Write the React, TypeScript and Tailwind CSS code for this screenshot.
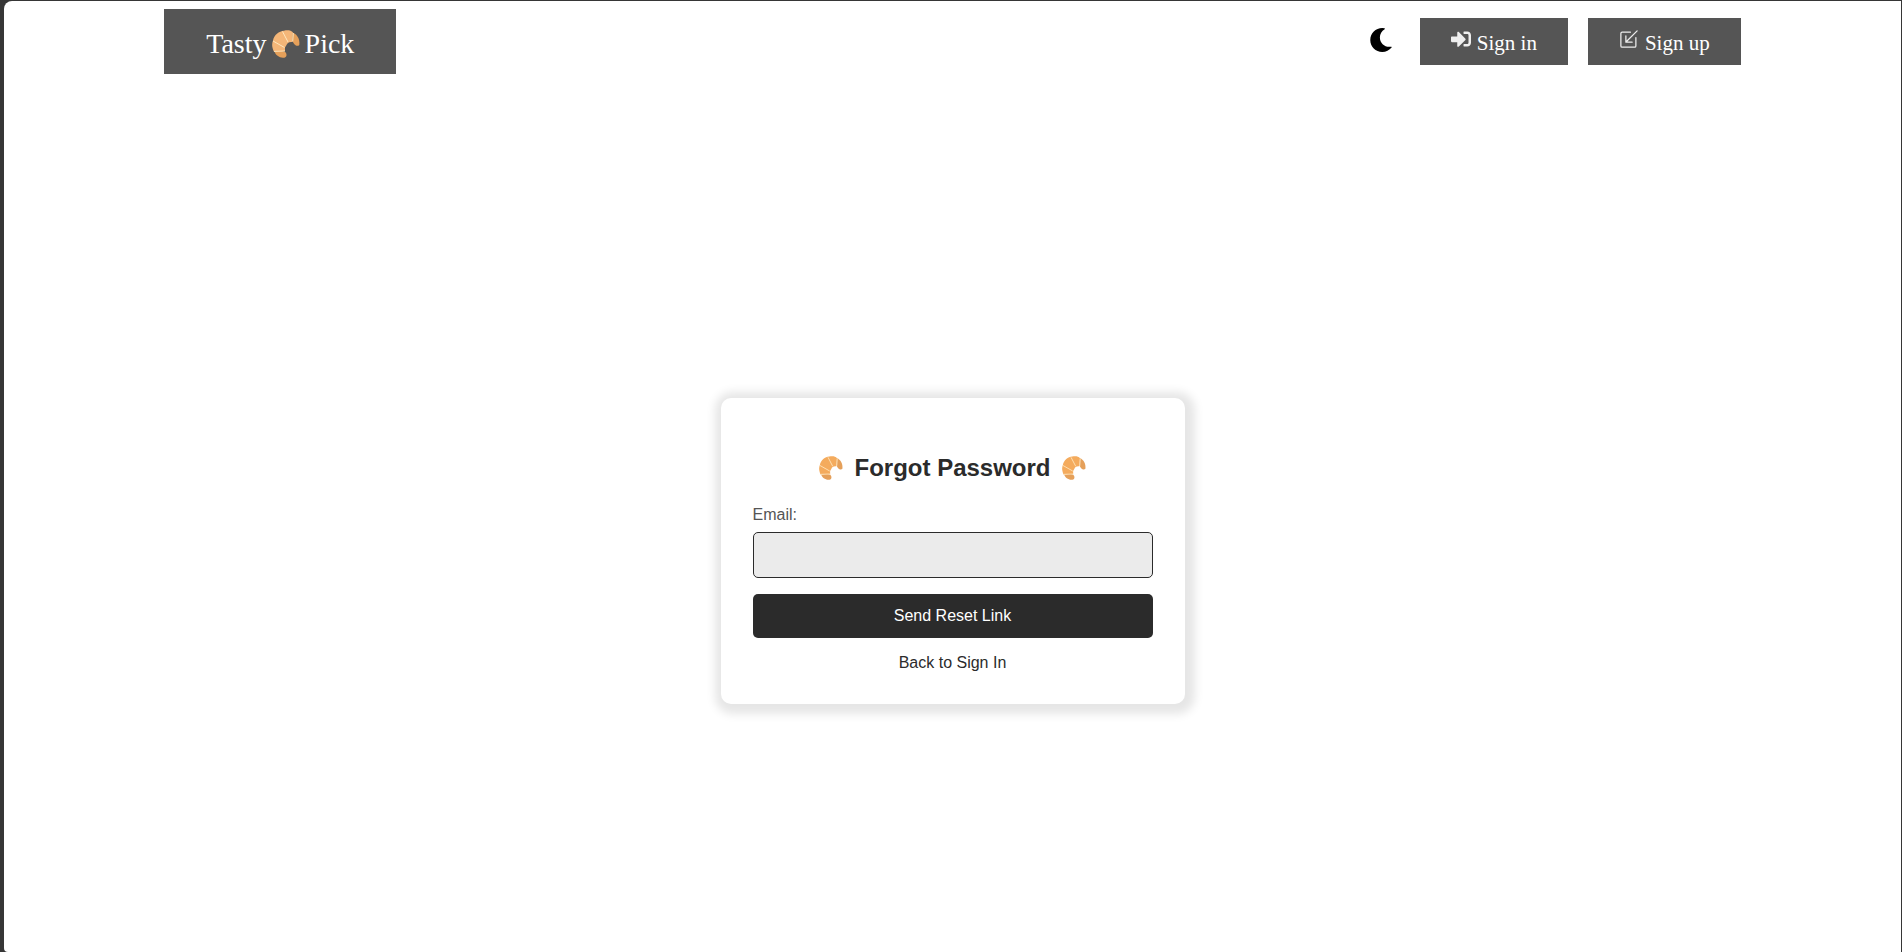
import { FaMoon, FaSignInAlt } from "react-icons/fa";
import { BsBoxArrowInDownLeft } from "react-icons/bs";

function Croissant({ className }: { className?: string }) {
  return (
    <svg viewBox="0 0 28 28" className={className} aria-hidden="true">
      <path d="M12 .7C15 0 19 0 21 2.5L20.500 12C17 11.500 15 13 14.500 15L13 17.500L13 21L1.800 21.500C-.5 16 0 13 1 10.500C2 5 7 1 12 .7Z" fill="currentColor" />
      <path d="M21 2.700C25 4 28 9 27.300 15C25 17.500 21 14 20.600 10.500Z" fill="#e5a05a" />
      <path d="M2.500 21.600C6 21 13 20.500 14 23C15.500 26 13.500 28 11 27.700C7 27.700 3.500 25 2.500 21.600Z" fill="#e5a05a" />
      <path d="M10.500 1.500L16 12M21.300 3L20.700 11.500M1 11L12.500 17.500M2 21.400L13 21" fill="none" stroke="#ffe7bd" strokeWidth="1" />
    </svg>
  );
}

export default function App() {
  return (
    <div className="flex min-h-screen bg-[#363636] pt-px pr-px pl-1">
      <div className="flex flex-1 flex-col rounded-tl-lg rounded-bl-sm bg-white">
        <header className="mx-auto flex w-[83.1%] items-center justify-between pt-2">
          <a href="#" className="flex h-[65px] items-center bg-[#555555] px-[42px] pt-1 font-['Liberation_Serif',serif] text-[28px] leading-8 text-white">
            Tasty
            <Croissant className="mx-[5px] size-7 text-[#f4b678]" />
            Pick
          </a>
          <nav className="flex items-center gap-5 font-['Liberation_Serif',serif] text-[21px] leading-6 text-white">
            <button type="button" aria-label="Toggle dark mode" className="px-[7px] pb-1 text-black">
              <FaMoon className="size-6" />
            </button>
            <a href="#" className="flex h-[47px] items-center gap-1.5 bg-[#555555] px-[31px] pt-0.5">
              <FaSignInAlt className="mb-2 size-5 text-[#eeeeee]" />
              <span>Sign in</span>
            </a>
            <a href="#" className="flex h-[47px] items-center gap-1.5 bg-[#555555] px-[31px] pt-0.5">
              <BsBoxArrowInDownLeft className="mb-2 size-5 text-[#eeeeee]" />
              <span>Sign up</span>
            </a>
          </nav>
        </header>
        <main className="flex flex-1 items-center justify-center pt-19">
          <form className="w-[464px] rounded-[10px] bg-white px-8 pt-14 pb-8 font-['Liberation_Sans',sans-serif] text-base leading-[18px] text-[#2b2b2b] shadow-[2px_2px_10px_8px_rgba(0,0,0,0.1)]">
            <h1 className="mb-6 flex items-center justify-center gap-[11px] text-2xl leading-7 font-bold">
              <Croissant className="size-6 text-[#f4ab5d]" />
              Forgot Password
              <Croissant className="size-6 text-[#f4ab5d]" />
            </h1>
            <label htmlFor="email" className="mb-2 block text-[#555555]">Email:</label>
            <input id="email" type="email" className="mb-4 block h-[46px] w-full rounded-[5px] border border-[#2b2b2b] bg-[#ebebeb] px-3" />
            <button type="submit" className="mb-4 block h-11 w-full rounded-[5px] bg-[#2b2b2b] text-white">Send Reset Link</button>
            <a href="#" className="block text-center">Back to Sign In</a>
          </form>
        </main>
      </div>
    </div>
  );
}
